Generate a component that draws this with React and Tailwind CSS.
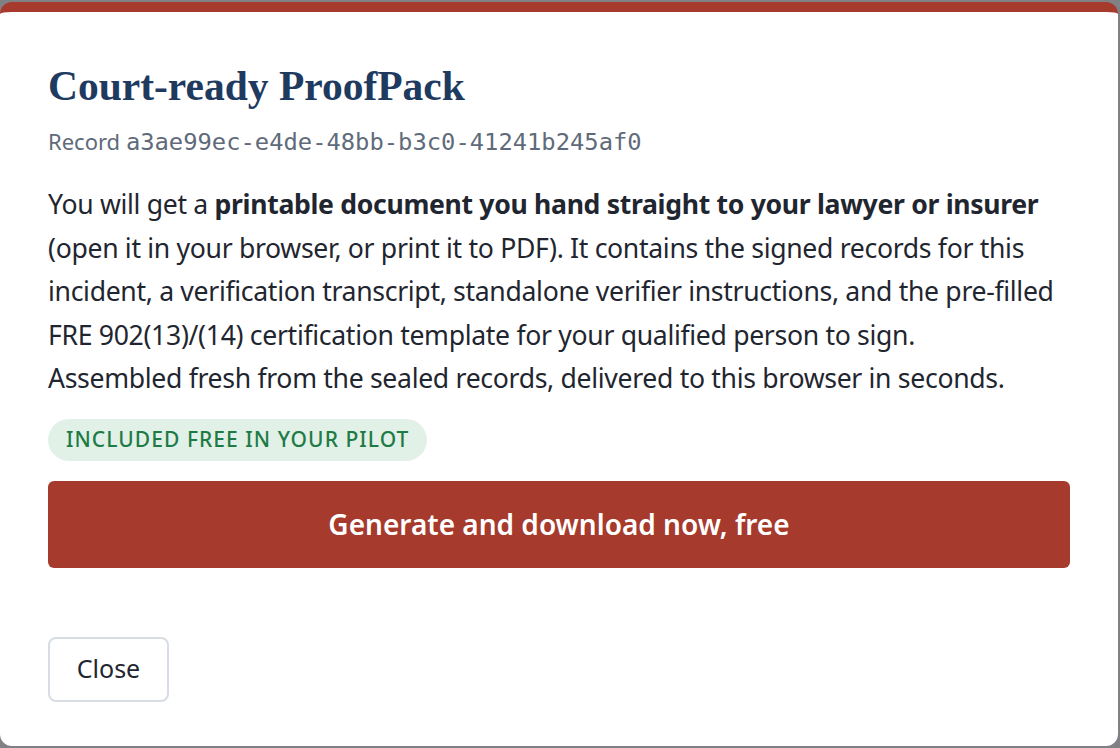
export default function App() {
  const recordId = "a3ae99ec-e4de-48bb-b3c0-41241b245af0";

  return (
    <div className="min-h-screen bg-[#7f8184] pt-[2px] pb-[3px] pr-[2px] font-['Noto_Sans',sans-serif]">
      {/* Dialog */}
      <div className="rounded-xl border-t-[10px] border-[#a63a2d] bg-white px-12 pt-[50px] pb-[44px]">
        <h1 className="font-['Liberation_Serif',serif] text-[41.5px] font-bold leading-[49px] text-[#1e3a5f]">
          Court-ready ProofPack
        </h1>
        <p className="mt-[15px] text-[22px] leading-[30px] text-[#5f6b7a]">
          Record{" "}
          <span className="font-['DejaVu_Sans_Mono',monospace] text-[23.8px]">
            {recordId}
          </span>
        </p>

        <p className="mt-[26px] text-[26.6px] leading-[43.5px] tracking-[-0.012em] text-[#1f2630]">
          You will get a{" "}
          <strong className="font-bold">
            printable document you hand straight to your lawyer or insurer
          </strong>{" "}
          (open it in your browser, or print it to PDF). It contains the signed
          records for this incident, a verification transcript, standalone
          verifier instructions, and the pre-filled FRE 902(13)/(14)
          certification template for your qualified person to sign.{" "}
          <span className="whitespace-nowrap">Assembled fresh</span> from the
          sealed records, delivered to this browser in seconds.
        </p>

        {/* Pilot badge */}
        <div className="mt-[18px] flex">
          <span className="flex h-[42px] items-center rounded-full bg-[#e2f1e7] px-[18px] text-[21px] font-medium tracking-[0.05em] text-[#1e7b45]">
            INCLUDED FREE IN YOUR PILOT
          </span>
        </div>

        <button className="mt-[20px] flex h-[87px] w-full items-center justify-center rounded-md bg-[#a63a2d] text-[28px] font-semibold text-white">
          Generate and download now, free
        </button>

        <button className="mt-[69px] h-[65px] w-[121px] rounded-lg border-2 border-[#d8dde3] bg-white text-[25px] text-[#1f2630]">
          Close
        </button>
      </div>
    </div>
  );
}
